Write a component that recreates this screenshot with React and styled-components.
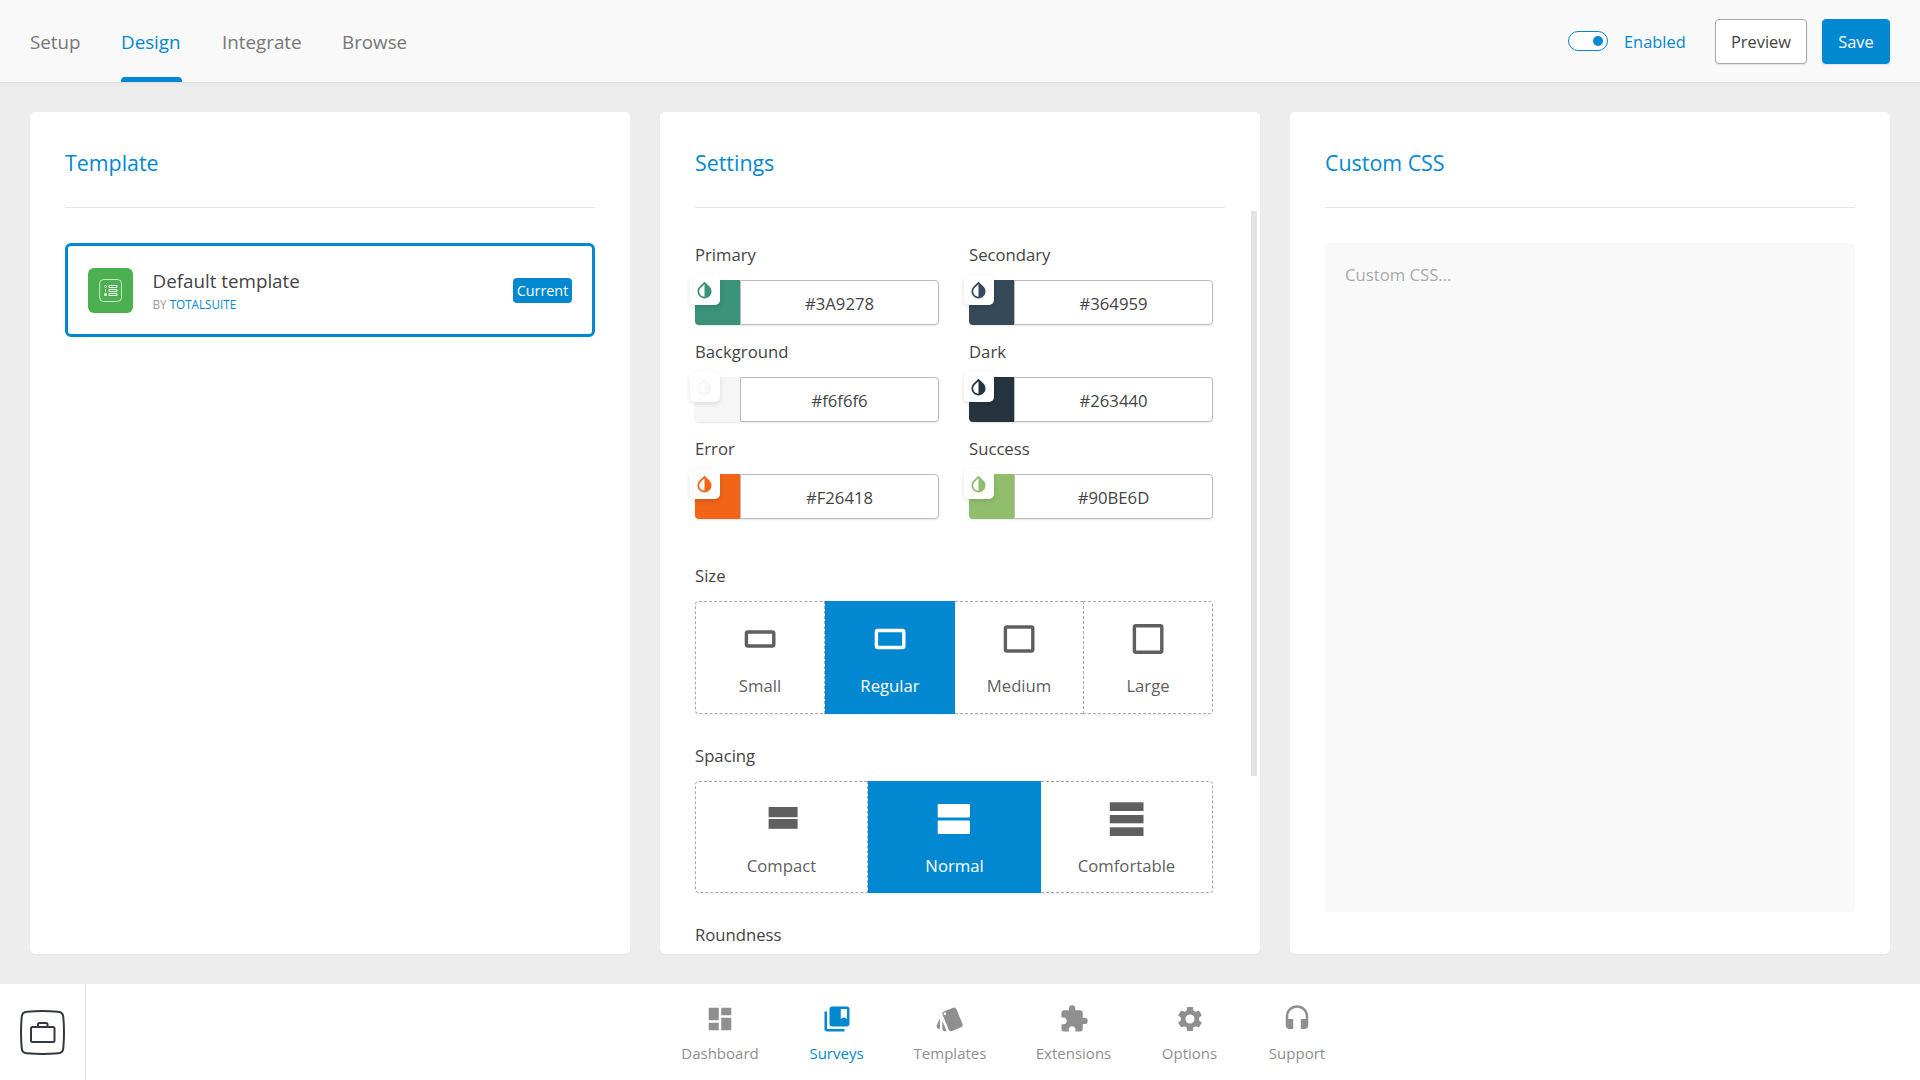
import React from "react";
import styled, { createGlobalStyle } from "styled-components";
import { MdDashboard, MdCollectionsBookmark, MdStyle, MdExtension, MdSettings, MdHeadset, MdInvertColors } from "react-icons/md";

const blue = "#0288d1";

const Global = createGlobalStyle`
  *, *::before, *::after { box-sizing: border-box; }
  body {
    margin: 0;
    background: #ededed;
    color: #444;
    font-family: "Segoe UI", "Open Sans", "Noto Sans", sans-serif;
    font-size: 16.7px;
    line-height: 24px;
  }
  button, input, textarea { font: inherit; color: inherit; }
`;

const Page = styled.div`
  height: 1080px;
  display: flex;
  flex-direction: column;
  overflow: hidden;
`;

const Header = styled.header`
  height: 83px;
  flex: none;
  display: flex;
  justify-content: space-between;
  padding: 0 30px;
  background: #f9f9f9;
  border-bottom: 1px solid #e1e1e1;
  box-shadow: 0 1px 2px rgba(0, 0, 0, 0.03);
`;

const Tabs = styled.nav`
  display: flex;
  gap: 40px;
`;

const Tab = styled.a`
  width: ${(p) => p.$w}px;
  white-space: nowrap;
  font-size: 18.8px;
  display: flex;
  align-items: center;
  padding-top: 1px;
  color: ${(p) => (p.$active ? blue : "#777")};
  &::after {
    content: "";
    width: 100%;
    flex: none;
    margin-left: -100%;
    align-self: flex-end;
    height: 5px;
    border-radius: 4px 4px 0 0;
    background: ${(p) => (p.$active ? blue : "transparent")};
  }
`;

const TabText = styled.span`
  width: 100%;
  flex: none;
`;

const Actions = styled.div`
  display: flex;
  align-items: center;
`;

const Toggle = styled.span`
  width: 40px;
  height: 20px;
  padding: 4px;
  border: 1px solid ${blue};
  border-radius: 10px;
  background: #fff;
  display: flex;
  justify-content: flex-end;
  &::after {
    content: "";
    width: 10px;
    height: 10px;
    border-radius: 50%;
    background: ${blue};
  }
`;

const ToggleLabel = styled.span`
  width: 61px;
  margin: 0 30px 0 16px;
  padding-top: 2px;
  color: ${blue};
  font-size: 16.4px;
  white-space: nowrap;
`;

const Button = styled.button`
  width: ${(p) => p.$w}px;
  height: 45px;
  padding: 1px 0 0;
  margin-left: ${(p) => (p.$primary ? 15 : 0)}px;
  border: 1px solid ${(p) => (p.$primary ? blue : "#aaa")};
  border-radius: 4px;
  background: ${(p) => (p.$primary ? blue : "#fff")};
  color: ${(p) => (p.$primary ? "#fff" : "#444")};
  font-size: 16.4px;
  box-shadow: 0 1px 2px rgba(0, 0, 0, 0.1);
`;

const Main = styled.main`
  flex: 1;
  min-height: 0;
  display: grid;
  grid-template-columns: repeat(3, 1fr);
  gap: 30px;
  padding: 29px 30px 30px;
`;

const Panel = styled.section`
  min-height: 0;
  display: flex;
  flex-direction: column;
  overflow: hidden;
  background: #fff;
  border-radius: 5px;
  box-shadow: 0 1px 2px rgba(0, 0, 0, 0.05);
`;

const PanelTitle = styled.h2`
  flex: none;
  height: 96px;
  margin: 0 35px;
  padding-top: 36px;
  border-bottom: 1px solid #e5e5e5;
  color: ${blue};
  font-size: 21.4px;
  font-weight: 400;
  line-height: 30px;
`;

const TemplateCard = styled.article`
  height: 94px;
  margin: 35px 35px 0;
  padding: 0 20px;
  display: flex;
  align-items: center;
  border: 3px solid ${blue};
  border-radius: 6px;
`;

const TemplateIcon = styled.svg`
  width: 45px;
  height: 45px;
  flex: none;
`;

const TemplateInfo = styled.div`
  flex: 1;
  margin-left: 19.5px;
  padding-top: 2px;
`;

const TemplateName = styled.div`
  font-size: 18.8px;
  line-height: 25px;
`;

const TemplateAuthor = styled.div`
  font-size: 11.7px;
  line-height: 20px;
  color: #999;
  a { color: ${blue}; }
`;

const Badge = styled.span`
  width: 59px;
  height: 25px;
  border-radius: 4px;
  background: ${blue};
  color: #fff;
  font-size: 14.4px;
  line-height: 25px;
  text-align: center;
`;

const SettingsBody = styled.div`
  flex: 1;
  min-height: 0;
  display: flex;
  justify-content: space-between;
  padding-left: 35px;
`;

const Fields = styled.div`
  width: 518px;
  padding-top: 35px;
`;

const ScrollThumb = styled.div`
  width: 6px;
  height: 565px;
  margin: 3px 3px 0 0;
  background: #e3e3e3;
`;

const ColorGrid = styled.div`
  display: grid;
  grid-template-columns: 244px 244px;
  column-gap: 30px;
  row-gap: 15px;
`;

const Label = styled.div`
  height: 24px;
  line-height: 24px;
`;

const ColorRow = styled.div`
  position: relative;
  height: 45px;
  margin-top: 13px;
  display: flex;
  border-radius: 4px;
  box-shadow: 0 1px 2px rgba(0, 0, 0, 0.1);
`;

const Swatch = styled.span`
  width: 45px;
  border-radius: 4px 0 0 4px;
  background: ${(p) => p.$color};
`;

const Dropper = styled.span`
  position: absolute;
  left: -5px;
  top: -5px;
  width: 30px;
  height: 30px;
  padding: 5px 4px;
  border-radius: 5px;
  background: #fff;
  color: ${(p) => p.$color};
  box-shadow: 0 2px 5px rgba(0, 0, 0, 0.12);
  svg { display: block; width: 21px; height: 21px; }
`;

const ColorInput = styled.input`
  width: 199px;
  padding: 2px 0 0;
  border: 1px solid #bbb;
  border-radius: 0 4px 4px 0;
  outline: 0;
  text-align: center;
  background: #fff;
`;

const Group = styled.div`
  margin-top: ${(p) => p.$top}px;
`;

const Options = styled.div`
  display: grid;
  grid-template-columns: ${(p) => p.$columns};
  height: ${(p) => p.$h}px;
  margin-top: 13px;
  border-radius: 4px;
  box-shadow: 0 1px 2px rgba(0, 0, 0, 0.08);
`;

const Option = styled.div`
  display: flex;
  flex-direction: column;
  align-items: center;
  border: 1px dashed ${(p) => (p.$active ? blue : "#aaa")};
  background: ${(p) => (p.$active ? blue : "#fff")};
  color: ${(p) => (p.$active ? "#fff" : "#5f5f5f")};
  &:nth-child(3) { border-left: 0; }
  &:nth-child(3):not(:last-child) { border-right: 0; }
  &:first-child { border-radius: 4px 0 0 4px; }
  &:last-child { border-radius: 0 4px 4px 0; }
  svg { display: block; width: 40px; height: 40px; margin: 17px 0 15px; }
`;

const CssInput = styled.textarea`
  flex: 1;
  margin: 35px 35px 42px;
  padding: 20px 20px;
  border: 0;
  border-radius: 4px;
  outline: 0;
  resize: none;
  background: #f9f9f9;
  &::placeholder { color: #aaa; opacity: 1; }
`;

const Footer = styled.footer`
  height: 96px;
  flex: none;
  display: grid;
  grid-template-columns: 86px 1fr;
  background: #fff;
`;

const Brand = styled.div`
  display: flex;
  align-items: center;
  justify-content: center;
  border-right: 1px solid #e3e3e3;
  svg { width: 45px; height: 45px; }
`;

const FooterNav = styled.nav`
  display: flex;
  justify-content: center;
  gap: 50px;
  padding-left: 1px;
`;

const NavItem = styled.a`
  width: ${(p) => p.$w}px;
  display: flex;
  flex-direction: column;
  align-items: center;
  padding-top: 20px;
  color: ${(p) => (p.$active ? blue : "#8f8f8f")};
  font-size: 15px;
  line-height: 22px;
  white-space: nowrap;
  svg { display: block; width: 30px; height: 30px; margin-bottom: 8px; }
`;

const tabs = [["Setup", 51], ["Design", 61], ["Integrate", 80], ["Browse", 64]];
const colors = [
  ["Primary", "#3A9278"], ["Secondary", "#364959"],
  ["Background", "#f6f6f6"], ["Dark", "#263440"],
  ["Error", "#F26418"], ["Success", "#90BE6D"],
];
const sizes = [["Small", 17.5], ["Regular", 20.5], ["Medium", 27.5], ["Large", 30]];
const nav = [
  ["Dashboard", 78, MdDashboard], ["Surveys", 55, MdCollectionsBookmark],
  ["Templates", 72, MdStyle], ["Extensions", 75, MdExtension],
  ["Options", 57, MdSettings], ["Support", 58, MdHeadset],
];

const SizeIcon = ({ h }) => (
  <svg viewBox="0 0 40 40" fill="none" stroke="currentColor" strokeWidth="3.4">
    <rect x="6.4" y={20 - h / 2 + 1.7} width="27.4" height={h - 3.4} rx="1.6" />
  </svg>
);

const SpacingIcon = ({ bars, x, w, r }) => (
  <svg viewBox="0 0 40 40" fill="currentColor">
    {bars.map(([y, h]) => <rect key={y} x={x} y={y} width={w} height={h} rx={r} />)}
  </svg>
);

const spacings = [
  ["Compact", { bars: [[8, 10.2], [20, 9.8]], x: 6.6, w: 29, r: 0 }],
  ["Normal", { bars: [[5, 13.5], [21.5, 13.5]], x: 2.7, w: 32.3, r: 1.2 }],
  ["Comfortable", { bars: [[3.3, 8.7], [16, 8.3], [28.3, 8.7]], x: 2.8, w: 33.7, r: 0 }],
];

export default function App() {
  return (
    <Page>
      <Global />
      <Header>
        <Tabs>
          {tabs.map(([t, w]) => (
            <Tab key={t} $w={w} $active={t === "Design"}><TabText>{t}</TabText></Tab>
          ))}
        </Tabs>
        <Actions>
          <Toggle />
          <ToggleLabel>Enabled</ToggleLabel>
          <Button $w={92}>Preview</Button>
          <Button $w={68} $primary>Save</Button>
        </Actions>
      </Header>
      <Main>
        <Panel>
          <PanelTitle>Template</PanelTitle>
          <TemplateCard>
            <TemplateIcon viewBox="0 0 45 45" fill="none" stroke="#fff">
              <rect width="45" height="45" rx="6" fill="#4caf50" stroke="none" />
              <rect x="11.7" y="11.5" width="21.800" height="22" rx="4" strokeOpacity=".7" />
              <path d="M21 17.5h8v2h-8zM21 21.5h8v2h-8zM21 25.5h8v2h-8z" strokeOpacity=".9" />
              <rect x="16.500" y="17.500" width="2" height="2" rx="1" strokeOpacity=".7" strokeWidth=".9" />
              <path d="M17.500 21.300v2.400" strokeOpacity=".8" />
              <circle cx="17.500" cy="26.500" r="1.500" fill="#fff" stroke="none" />
            </TemplateIcon>
            <TemplateInfo>
              <TemplateName>Default template</TemplateName>
              <TemplateAuthor>BY <a>TOTALSUITE</a></TemplateAuthor>
            </TemplateInfo>
            <Badge>Current</Badge>
          </TemplateCard>
        </Panel>
        <Panel>
          <PanelTitle>Settings</PanelTitle>
          <SettingsBody>
            <Fields>
              <ColorGrid>
                {colors.map(([name, c]) => (
                  <div key={name}>
                    <Label>{name}</Label>
                    <ColorRow>
                      <Swatch $color={c} />
                      <Dropper $color={c}><MdInvertColors /></Dropper>
                      <ColorInput defaultValue={c} />
                    </ColorRow>
                  </div>
                ))}
              </ColorGrid>
              <Group $top={45}>
                <Label>Size</Label>
                <Options $h={113} $columns="130px 130px 128px 130px">
                  {sizes.map(([n, h], i) => (
                    <Option key={n} $active={i === 1}><SizeIcon h={h} />{n}</Option>
                  ))}
                </Options>
              </Group>
              <Group $top={30}>
                <Label>Spacing</Label>
                <Options $h={112} $columns="173px 173px 172px">
                  {spacings.map(([n, icon], i) => (
                    <Option key={n} $active={i === 1}><SpacingIcon {...icon} />{n}</Option>
                  ))}
                </Options>
              </Group>
              <Group $top={30}><Label>Roundness</Label></Group>
            </Fields>
            <ScrollThumb />
          </SettingsBody>
        </Panel>
        <Panel>
          <PanelTitle>Custom CSS</PanelTitle>
          <CssInput placeholder="Custom CSS..." />
        </Panel>
      </Main>
      <Footer>
        <Brand>
          <svg viewBox="0 0 45 45" fill="none" stroke="#323844" strokeWidth="2">
            <path d="M7 1.7Q22.500 .3 38 1.700Q43 2 43.300 7Q44.700 22.500 43.300 38Q43 43 38 43.300Q22.500 44.700 7 43.300Q2 43 1.700 38Q.3 22.500 1.700 7Q2 2 7 1.700Z" />
            <rect x="11" y="17" width="23.500" height="15" rx="1.500" />
            <path d="M18 17v-2.500q0-1.500 1.500-1.500h6.500q1.500 0 1.500 1.500v2.500" />
          </svg>
        </Brand>
        <FooterNav>
          {nav.map(([n, w, Icon]) => (
            <NavItem key={n} $w={w} $active={n === "Surveys"}><Icon />{n}</NavItem>
          ))}
        </FooterNav>
      </Footer>
    </Page>
  );
}
